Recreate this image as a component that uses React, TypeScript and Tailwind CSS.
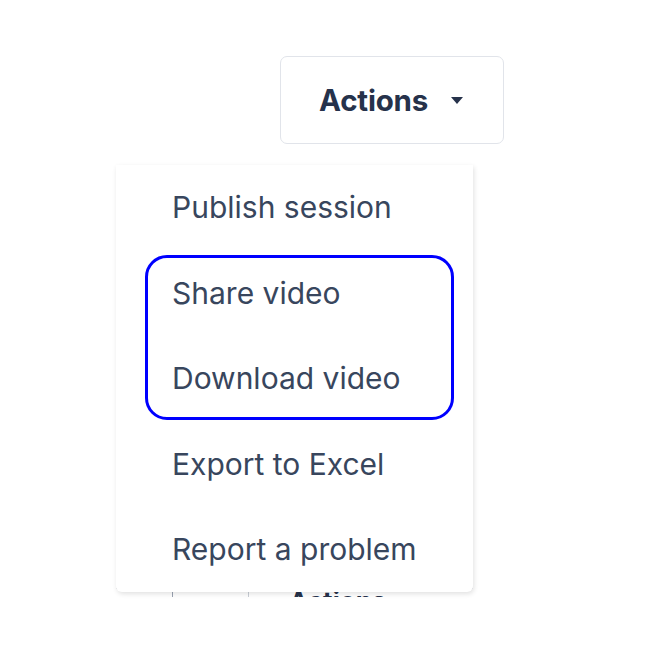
import React from "react";

const items = [
  "Publish session",
  "Share video",
  "Download video",
  "Export to Excel",
  "Report a problem",
];

export default function App() {
  return (
    <div
      className="w-[662px] h-[648px] bg-white overflow-hidden flex flex-col"
      style={{ fontFamily: "Inter, 'Open Sans', sans-serif" }}
    >
      <div className="pt-[56px] pl-[280px] flex">
        <button className="w-[224px] h-[88px] border border-[#e1e4ea] rounded-[7px] bg-white flex items-center justify-start pl-[38px] gap-[23px]">
          <span className="text-[29.5px] font-bold text-[#26324b] tracking-[-0.2px]">Actions</span>
          <svg width="12" height="8" viewBox="0 0 12 8" className="mt-[1px]">
            <path d="M0 0 H12 L6 7 Z" fill="#26324b" />
          </svg>
        </button>
      </div>

      {/* page content under the menu */}
      <div className="relative pl-[116px] pt-[21px]">
        <div className="w-[357px] flex flex-col">
          <div className="h-[423px]" />
          <div className="h-[9px] overflow-hidden flex items-start border-t border-[#e6e8ec]">
            <div className="w-[56px]" />
            <div className="w-[1px] h-full bg-[#9aa3b2]" />
            <div className="w-[75px]" />
            <div className="w-[1px] h-full bg-[#c9ced6]" />
            <div className="pl-[40px] text-[26px] font-bold leading-none text-[#26324b]">Actions</div>
          </div>
        </div>

        {/* dropdown menu */}
        <div className="absolute left-[116px] top-[21px] w-[357px] h-[427px] bg-white rounded-b-[6px] shadow-[1px_2px_5px_rgba(0,0,0,0.12)] flex flex-col">
          {items.map((t) => (
            <div
              key={t}
              className="h-[85.5px] flex items-center pl-[56px] text-[30px] text-[#38465d] shrink-0"
            >
              {t}
            </div>
          ))}
          {/* highlight annotation */}
          <div className="absolute left-[29px] top-[90px] w-[309px] h-[165px] border-[3px] border-[#0000ff] rounded-[22px]" />
        </div>
      </div>
    </div>
  );
}
